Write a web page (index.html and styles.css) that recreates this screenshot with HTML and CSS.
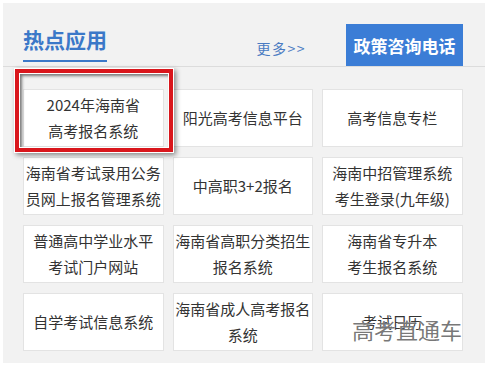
FILE: index.html
```html
<!DOCTYPE html>
<html lang="zh-CN">
<head>
<meta charset="utf-8">
<title>热点应用</title>
<link rel="stylesheet" href="styles.css">
</head>
<body>
<div class="panel">
  <div class="header">
    <h2 class="title">热点应用</h2>
    <a class="more" href="#">更多&gt;&gt;</a>
    <div class="hotline">政策咨询电话</div>
  </div>
  <div class="grid">
    <a class="cell" href="#">2024年海南省<br>高考报名系统</a>
    <a class="cell" href="#">阳光高考信息平台</a>
    <a class="cell" href="#">高考信息专栏</a>
    <a class="cell" href="#">海南省考试录用公务<br>员网上报名管理系统</a>
    <a class="cell" href="#">中高职3+2报名</a>
    <a class="cell" href="#">海南中招管理系统<br>考生登录(九年级)</a>
    <a class="cell" href="#">普通高中学业水平<br>考试门户网站</a>
    <a class="cell" href="#">海南省高职分类招生<br>报名系统</a>
    <a class="cell" href="#">海南省专升本<br>考生报名系统</a>
    <a class="cell" href="#">自学考试信息系统</a>
    <a class="cell" href="#">海南省成人高考报名<br>系统</a>
    <a class="cell" href="#">考试日历</a>
  </div>
  <div class="highlight"></div>
  <div class="watermark">高考直通车</div>
</div>
</body>
</html>
```
FILE: styles.css
```css
html, body {
  margin: 0;
  padding: 0;
  background: #ffffff;
}
body {
  font-family: "Noto Sans CJK SC", "Noto Sans", sans-serif;
  color: #333333;
}
.panel {
  position: relative;
  margin: 3px 0 0 3px;
  width: 482px;
  height: 360px;
  background: #f2f2f2;
}
.header {
  display: flex;
  align-items: flex-end;
  height: 63px;
  padding: 0 22px 0 20px;
  border-bottom: 1px solid #dcdcdc;
}
.title {
  margin: 0 0 4px 0;
  font-size: 21px;
  line-height: 30px;
  font-weight: bold;
  color: #3b78c8;
  padding-bottom: 6px;
  border-bottom: 2px solid #3b78c8;
}
.more {
  margin-left: auto;
  margin-right: 40px;
  margin-bottom: 8px;
  font-size: 14px;
  line-height: 20px;
  color: #4a7bc2;
  text-decoration: none;
  letter-spacing: 1.5px;
}
.hotline {
  width: 117px;
  height: 42px;
  background: #3b7dd6;
  color: #ffffff;
  font-size: 17px;
  font-weight: bold;
  display: flex;
  align-items: center;
  justify-content: center;
}
.grid {
  display: grid;
  grid-template-columns: repeat(3, 140.5px);
  grid-auto-rows: 58px;
  column-gap: 9px;
  row-gap: 10px;
  margin: 22px 0 0 20px;
}
.cell {
  box-sizing: border-box;
  background: #ffffff;
  border: 1px solid #e3e3e3;
  display: flex;
  align-items: center;
  justify-content: center;
  text-align: center;
  font-size: 15px;
  line-height: 26px;
  color: #333333;
  text-decoration: none;
  white-space: nowrap;
}
.highlight {
  position: absolute;
  left: 12px;
  top: 66px;
  width: 158px;
  height: 83px;
  box-sizing: border-box;
  border: 4px solid #d9161c;
  box-shadow: 0 0 0 1px #ffffff, 2px 2px 5px 1px rgba(0, 0, 0, 0.45),
    inset 0 0 0 1px #ffffff, inset 2px 2px 3px 1px rgba(0, 0, 0, 0.5);
}
.watermark {
  position: absolute;
  left: 349px;
  top: 310px;
  font-size: 22px;
  line-height: 32px;
  color: rgba(95, 95, 95, 0.85);
  text-shadow: 0 0 1px #ffffff;
  white-space: nowrap;
}
```
